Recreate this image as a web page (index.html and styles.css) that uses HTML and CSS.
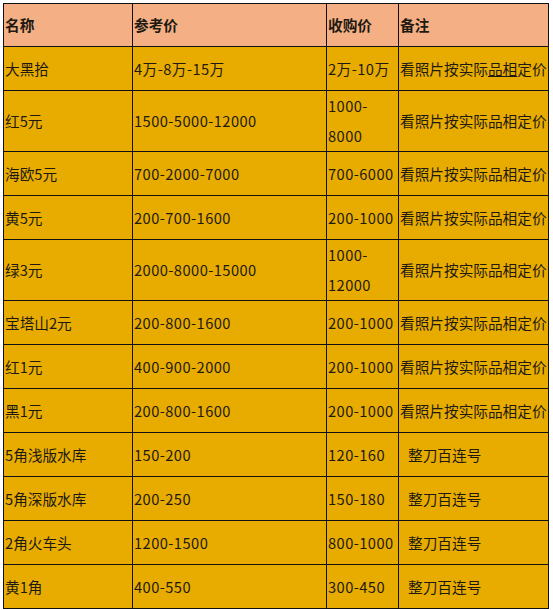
FILE: index.html
```html
<!DOCTYPE html>
<html lang="zh">
<head>
<meta charset="utf-8">
<title>价格表</title>
<link rel="stylesheet" href="styles.css">
</head>
<body>
<table class="price-table">
  <colgroup>
    <col class="c-name">
    <col class="c-ref">
    <col class="c-buy">
    <col class="c-note">
  </colgroup>
  <thead>
    <tr class="head-row">
      <th>名称</th>
      <th>参考价</th>
      <th>收购价</th>
      <th>备注</th>
    </tr>
  </thead>
  <tbody>
    <tr><td>大黑拾</td><td class="num">4万-8万-15万</td><td class="num">2万-10万</td><td>看照片按实际<span class="ul">品相</span>定价</td></tr>
    <tr class="tall"><td>红5元</td><td class="num">1500-5000-12000</td><td class="num">1000-<br>8000</td><td>看照片按实际品相定价</td></tr>
    <tr><td>海欧5元</td><td class="num">700-2000-7000</td><td class="num">700-6000</td><td>看照片按实际品相定价</td></tr>
    <tr><td>黄5元</td><td class="num">200-700-1600</td><td class="num">200-1000</td><td>看照片按实际品相定价</td></tr>
    <tr class="tall"><td>绿3元</td><td class="num">2000-8000-15000</td><td class="num">1000-<br>12000</td><td>看照片按实际品相定价</td></tr>
    <tr><td>宝塔山2元</td><td class="num">200-800-1600</td><td class="num">200-1000</td><td>看照片按实际品相定价</td></tr>
    <tr><td>红1元</td><td class="num">400-900-2000</td><td class="num">200-1000</td><td>看照片按实际品相定价</td></tr>
    <tr><td>黑1元</td><td class="num">200-800-1600</td><td class="num">200-1000</td><td>看照片按实际品相定价</td></tr>
    <tr><td>5角浅版水库</td><td class="num">150-200</td><td class="num">120-160</td><td class="indent">整刀百连号</td></tr>
    <tr><td>5角深版水库</td><td class="num">200-250</td><td class="num">150-180</td><td class="indent">整刀百连号</td></tr>
    <tr><td>2角火车头</td><td class="num">1200-1500</td><td class="num">800-1000</td><td class="indent">整刀百连号</td></tr>
    <tr><td>黄1角</td><td class="num">400-550</td><td class="num">300-450</td><td class="indent">整刀百连号</td></tr>
  </tbody>
</table>
</body>
</html>
```

FILE: styles.css
```css
html, body {
  margin: 0;
  padding: 0;
  background: #ffffff;
}

body {
  padding: 3px 0 0 3px;
  font-family: "Noto Sans CJK SC", "Microsoft YaHei", sans-serif;
  font-size: 14.67px;
  color: #1e1a12;
}

.price-table {
  border-collapse: collapse;
  table-layout: fixed;
  width: 545px;
}

.c-name { width: 129px; }
.c-ref  { width: 194px; }
.c-buy  { width: 72px; }
.c-note { width: 150px; }

.price-table th,
.price-table td {
  border: 1px solid #111;
  padding: 0 0 0 1px;
  line-height: 30px;
  text-align: left;
  vertical-align: middle;
  white-space: nowrap;
  overflow: hidden;
}

.head-row th {
  background: #f4b084;
  font-weight: bold;
  height: 42px;
}

.price-table td {
  background: #e8ac00;
  height: 43px;
}

.price-table .tall td {
  height: 60px;
}

.price-table td.num {
  letter-spacing: 0.45px;
}

.price-table td.indent {
  padding-left: 9px;
}

.ul {
  text-decoration: underline;
}
```
